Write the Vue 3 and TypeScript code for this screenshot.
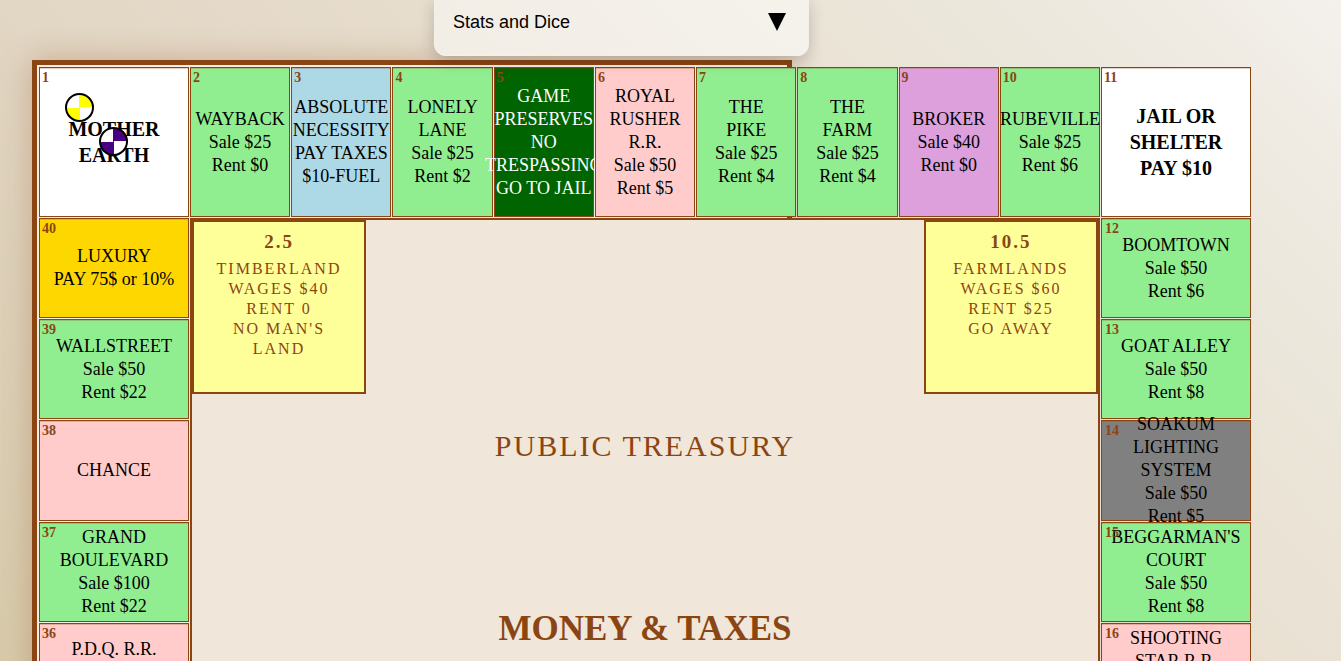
<script setup lang="ts">
import { computed, ref } from 'vue'

interface Tile {
  id: number
  kind: string
  lines: string[]
}

const statsOpen = ref(false)

const top: Tile[] = [
  { id: 1, kind: 'corner', lines: ['MOTHER', 'EARTH'] },
  { id: 2, kind: 'land', lines: ['WAYBACK', 'Sale $25', 'Rent $0'] },
  { id: 3, kind: 'tax', lines: ['ABSOLUTE', 'NECESSITY', 'PAY TAXES', '$10-FUEL'] },
  { id: 4, kind: 'land', lines: ['LONELY', 'LANE', 'Sale $25', 'Rent $2'] },
  { id: 5, kind: 'preserve', lines: ['GAME', 'PRESERVES', 'NO', 'TRESPASSING', 'GO TO JAIL'] },
  { id: 6, kind: 'rail', lines: ['ROYAL', 'RUSHER', 'R.R.', 'Sale $50', 'Rent $5'] },
  { id: 7, kind: 'land', lines: ['THE', 'PIKE', 'Sale $25', 'Rent $4'] },
  { id: 8, kind: 'land', lines: ['THE', 'FARM', 'Sale $25', 'Rent $4'] },
  { id: 9, kind: 'broker', lines: ['BROKER', 'Sale $40', 'Rent $0'] },
  { id: 10, kind: 'land', lines: ['RUBEVILLE', 'Sale $25', 'Rent $6'] },
  { id: 11, kind: 'corner', lines: ['JAIL OR', 'SHELTER', 'PAY $10'] },
]

const right: Tile[] = [
  { id: 12, kind: 'land', lines: ['BOOMTOWN', 'Sale $50', 'Rent $6'] },
  { id: 13, kind: 'land', lines: ['GOAT ALLEY', 'Sale $50', 'Rent $8'] },
  { id: 14, kind: 'utility', lines: ['SOAKUM', 'LIGHTING', 'SYSTEM', 'Sale $50', 'Rent $5'] },
  { id: 15, kind: 'land', lines: ["BEGGARMAN'S", 'COURT', 'Sale $50', 'Rent $8'] },
  { id: 16, kind: 'rail', lines: ['SHOOTING', 'STAR R.R.', 'Sale $50', 'Rent $5'] },
]

const left: Tile[] = [
  { id: 40, kind: 'luxury', lines: ['LUXURY', 'PAY 75$ or 10%'] },
  { id: 39, kind: 'land', lines: ['WALLSTREET', 'Sale $50', 'Rent $22'] },
  { id: 38, kind: 'rail', lines: ['CHANCE'] },
  { id: 37, kind: 'land', lines: ['GRAND', 'BOULEVARD', 'Sale $100', 'Rent $22'] },
  { id: 36, kind: 'rail', lines: ['P.D.Q. R.R.', 'Sale $50', 'Rent $5'] },
]

const tiles = computed(() => [
  ...top.map((t, i) => ({ ...t, side: 'top', row: 1, col: i + 1 })),
  ...left.map((t, i) => ({ ...t, side: 'left', row: i + 2, col: 1 })),
  ...right.map((t, i) => ({ ...t, side: 'right', row: i + 2, col: 11 })),
])

const camps = [
  { id: '2.5', lines: ['TIMBERLAND', 'WAGES $40', 'RENT 0', "NO MAN'S", 'LAND'] },
  { id: '10.5', lines: ['FARMLANDS', 'WAGES $60', 'RENT $25', 'GO AWAY'] },
]
</script>

<template>
  <main class="page">
    <button class="stats" type="button" :aria-expanded="statsOpen" @click="statsOpen = !statsOpen">
      <span>Stats and Dice</span>
      <svg width="18" height="18" viewBox="0 0 18 18" aria-hidden="true">
        <path d="M0 0H18L9 18Z" fill="#000" />
      </svg>
    </button>

    <div class="frame">
      <div class="board">
        <section
          v-for="t in tiles"
          :key="t.id"
          class="tile"
          :class="[t.kind, t.side]"
          :style="{ gridRow: t.row, gridColumn: t.col }"
        >
          <span class="number">{{ t.id }}</span>
          <span v-for="line in t.lines" :key="line" class="line">{{ line }}</span>
          <template v-if="t.id === 1">
            <i class="pawn yellow"></i>
            <i class="pawn indigo"></i>
          </template>
        </section>

        <div class="center">
          <div class="camps">
            <section v-for="c in camps" :key="c.id" class="camp">
              <h3>{{ c.id }}</h3>
              <p v-for="line in c.lines" :key="line">{{ line }}</p>
            </section>
          </div>
          <h2 class="treasury">PUBLIC TREASURY</h2>
          <h1 class="title">MONEY &amp; TAXES</h1>
        </div>
      </div>
    </div>
  </main>
</template>

<style>
html,
body {
  overflow: hidden;
}
</style>

<style scoped>
.page {
  position: relative;
  box-sizing: border-box;
  height: 100vh;
  overflow: hidden;
  padding: 60px 32px 0;
  font-family: 'Liberation Serif', 'Times New Roman', serif;
  color: #000;
  background: linear-gradient(45deg, #d7caab 0%, #e2d6c4 33%, #e9e0d1 62%, #ece8dd 84%, #f4f0ec 100%);
}

.stats {
  position: absolute;
  z-index: 5;
  top: 0;
  left: 434px;
  width: 28vw;
  height: 56px;
  display: flex;
  align-items: center;
  justify-content: space-between;
  padding: 0 22px 12px 18px;
  border: 1px solid #f5f1ea;
  border-top: 0;
  border-radius: 0 0 12px 12px;
  background: linear-gradient(45deg, #f2ede5, #f5f2ec);
  box-shadow: 0 4px 16px rgba(0, 0, 0, 0.2);
  font: 18px/20px 'Liberation Sans', Arial, sans-serif;
  color: #000;
  cursor: pointer;
}

.frame {
  box-sizing: border-box;
  width: 100%;
  max-width: 760px;
  padding: 2px;
  border: 5px solid #8b4513;
  background: #f5ede6;
  box-shadow: 0 0 30px rgba(139, 69, 19, 0.3);
}

.board {
  --run: 1212px;
  display: grid;
  width: var(--run);
  height: var(--run);
  grid-template-columns: 150px repeat(9, minmax(0, 1fr)) 150px;
  grid-template-rows: 150px repeat(9, minmax(0, 1fr)) 150px;
  gap: 1px;
}

.tile {
  position: relative;
  display: flex;
  flex-direction: column;
  align-items: center;
  justify-content: center;
  min-width: 0;
  min-height: 0;
  border: 1px solid #8b4513;
  box-shadow: inset 0 1px 0 rgba(139, 69, 19, 0.25);
  font-size: 18px;
  line-height: 23px;
  white-space: nowrap;
}

.number {
  position: absolute;
  top: 2px;
  left: 2px;
  font-size: 14px;
  line-height: 16px;
  font-weight: bold;
  color: #8b4513;
}

.right .number {
  left: 3px;
}

.land { background: #90ee90; }
.tax { background: #add8e6; }
.preserve { background: #006400; color: #fff; }
.rail { background: #ffcccb; }
.broker { background: #dda0dd; }
.utility { background: #808080; }
.luxury { background: #ffd700; }

.corner {
  background: #fff;
  font-size: 20px;
  line-height: 26px;
  font-weight: bold;
}

.pawn {
  position: absolute;
  box-sizing: border-box;
  width: 29px;
  height: 29px;
  border: 2px solid #000;
  border-radius: 50%;
}

.yellow {
  top: 25px;
  left: 25px;
  background: conic-gradient(#ff0 25%, #fff 0 50%, #ff0 0 75%, #fff 0);
}

.indigo {
  top: 59px;
  left: 59px;
  background: conic-gradient(#4b0082 25%, #fff 0 50%, #4b0082 0 75%, #fff 0);
}

.center {
  grid-area: 2 / 2 / 11 / 11;
  border: 2px solid #8b4513;
  background: #f0e6da;
  color: #8b4513;
  text-align: center;
}

.camps {
  display: flex;
  justify-content: space-between;
}

.camp {
  box-sizing: border-box;
  width: 174px;
  height: 174px;
  padding-top: 8px;
  border: 2px solid #8b4513;
  background: #ffff99;
  font-size: 16px;
  line-height: 20px;
  letter-spacing: 2px;
}

.camp h3 {
  margin: 0 0 5px;
  font-size: 19px;
  line-height: 24px;
}

.camp p {
  margin: 0;
}

.treasury {
  margin: 32px 0 0;
  font-size: 30px;
  line-height: 40px;
  font-weight: normal;
  letter-spacing: 2px;
}

.title {
  margin: 143px 0 0;
  font-size: 35px;
  line-height: 40px;
}
</style>
